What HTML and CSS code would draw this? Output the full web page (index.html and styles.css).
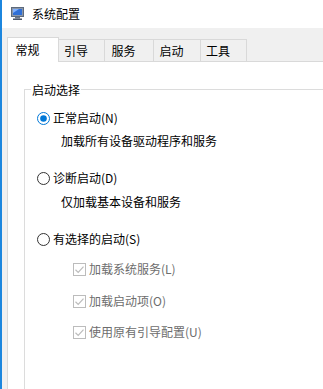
FILE: index.html
```html
<!DOCTYPE html>
<html lang="zh-CN">
<head>
<meta charset="utf-8">
<title>系统配置</title>
<link rel="stylesheet" href="styles.css">
</head>
<body>
<div class="window">
  <div class="titlebar">
    <svg class="app-icon" width="13" height="13" viewBox="0 0 13 13">
      <rect x="0.5" y="0.5" width="12" height="9" fill="#8a96a8" stroke="#5d6a7c"/>
      <rect x="2" y="2" width="9" height="6" fill="#2f6fd6"/>
      <path d="M2 2 L8 2 L2 6 Z" fill="#7fb0ff"/>
      <rect x="4" y="10" width="5" height="1.5" fill="#6b778a"/>
      <rect x="2" y="11.5" width="9" height="1.5" fill="#4a5568"/>
    </svg>
    <span class="title">系统配置</span>
  </div>
  <div class="client">
    <div class="tabs">
      <div class="tab tab-active">常规</div>
      <div class="tab w46">引导</div>
      <div class="tab w49">服务</div>
      <div class="tab w47">启动</div>
      <div class="tab w46">工具</div>
    </div>
    <div class="panel">
      <div class="group">
        <div class="legend">启动选择</div>
        <div class="row radio-row r1">
          <svg class="radio" width="13" height="13" viewBox="0 0 13 13">
            <circle cx="6.5" cy="6.5" r="6" fill="#fff" stroke="#0078d7" stroke-width="1"/>
            <circle cx="6.5" cy="6.5" r="3.3" fill="#0078d7"/>
          </svg>
          <span>正常启动(N)</span>
        </div>
        <div class="row desc d1">加载所有设备驱动程序和服务</div>
        <div class="row radio-row r2">
          <svg class="radio" width="13" height="13" viewBox="0 0 13 13">
            <circle cx="6.5" cy="6.5" r="6" fill="#fff" stroke="#333" stroke-width="1"/>
          </svg>
          <span>诊断启动(D)</span>
        </div>
        <div class="row desc d2">仅加载基本设备和服务</div>
        <div class="row radio-row r3">
          <svg class="radio" width="13" height="13" viewBox="0 0 13 13">
            <circle cx="6.5" cy="6.5" r="6" fill="#fff" stroke="#333" stroke-width="1"/>
          </svg>
          <span>有选择的启动(S)</span>
        </div>
        <div class="row check-row c1">
          <svg class="check" width="13" height="13" viewBox="0 0 13 13">
            <rect x="0.5" y="0.5" width="12" height="12" fill="#fff" stroke="#bcbcbc"/>
            <path d="M2.5 6.8 L5.2 9.4 L10.5 3.6" fill="none" stroke="#bcbcbc" stroke-width="1.2"/>
          </svg>
          <span>加载系统服务(L)</span>
        </div>
        <div class="row check-row c2">
          <svg class="check" width="13" height="13" viewBox="0 0 13 13">
            <rect x="0.5" y="0.5" width="12" height="12" fill="#fff" stroke="#bcbcbc"/>
            <path d="M2.5 6.8 L5.2 9.4 L10.5 3.6" fill="none" stroke="#bcbcbc" stroke-width="1.2"/>
          </svg>
          <span>加载启动项(O)</span>
        </div>
        <div class="row check-row c3">
          <svg class="check" width="13" height="13" viewBox="0 0 13 13">
            <rect x="0.5" y="0.5" width="12" height="12" fill="#fff" stroke="#bcbcbc"/>
            <path d="M2.5 6.8 L5.2 9.4 L10.5 3.6" fill="none" stroke="#bcbcbc" stroke-width="1.2"/>
          </svg>
          <span>使用原有引导配置(U)</span>
        </div>
      </div>
    </div>
  </div>
</div>
</body>
</html>
```
FILE: styles.css
```css
html, body {
  margin: 0;
  padding: 0;
  width: 323px;
  height: 389px;
  overflow: hidden;
  background: #f0f0f0;
}
body {
  font-family: "Noto Sans CJK SC", "Noto Sans", "Liberation Sans", sans-serif;
  font-size: 12px;
  color: #000;
}
.window {
  border-left: 2px solid #1c86de;
  height: 389px;
  box-sizing: border-box;
  width: 600px;
}
.titlebar {
  height: 28px;
  box-sizing: border-box;
  background: #fff;
  display: grid;
  grid-template-columns: 13px max-content;
  column-gap: 8px;
  align-items: center;
  padding-left: 9px;
}
.app-icon {
  display: block;
  width: 13px;
  height: 13px;
  margin-top: -2px;
}
.title {
  display: block;
  line-height: 16px;
  margin-top: -1px;
}
.client {
  padding-top: 9px;
  padding-left: 5px;
  background: #f0f0f0;
  height: 352px;
}
.tabs {
  display: flex;
  align-items: flex-end;
  height: 24px;
}
.tab {
  box-sizing: border-box;
  height: 22px;
  border-top: 1px solid #d9d9d9;
  border-right: 1px solid #d9d9d9;
  background: #f0f0f0;
  display: flex;
  align-items: center;
  justify-content: center;
  line-height: 16px;
  padding-right: 11px;
}
.tab-active {
  width: 52px;
  height: 25px;
  margin-bottom: -1px;
  border-left: 1px solid #d9d9d9;
  background: #fff;
  position: relative;
  z-index: 1;
  padding-bottom: 1px;
}
.w46 { width: 46px; }
.w47 { width: 47px; }
.w49 { width: 49px; }
.panel {
  background: #fff;
  border-top: 1px solid #d9d9d9;
  border-left: 1px solid #d9d9d9;
  padding-top: 27px;
  padding-left: 16px;
  height: 400px;
}
.group {
  border: 1px solid #dcdcdc;
  width: 500px;
  height: 400px;
  padding-left: 12px;
  box-sizing: border-box;
}
.legend {
  display: block;
  width: max-content;
  height: 18px;
  line-height: 18px;
  margin-top: -9px;
  margin-left: -6px;
  padding: 0 1px;
  background: #fff;
}
.row {
  height: 20px;
  line-height: 20px;
  display: flex;
  align-items: center;
  white-space: nowrap;
}
.radio, .check {
  display: block;
  flex: none;
  margin-right: 3px;
}
.r1 { margin-top: 9px; }
.d1 { margin-top: 3px; }
.r2 { margin-top: 17px; }
.d2 { margin-top: 4px; }
.r3 { margin-top: 17px; }
.desc { padding-left: 24px; }
.check-row {
  padding-left: 36px;
  color: #6d6d6d;
}
.c1 { margin-top: 10px; }
.c2 { margin-top: 12px; }
.c3 { margin-top: 11px; }
```
